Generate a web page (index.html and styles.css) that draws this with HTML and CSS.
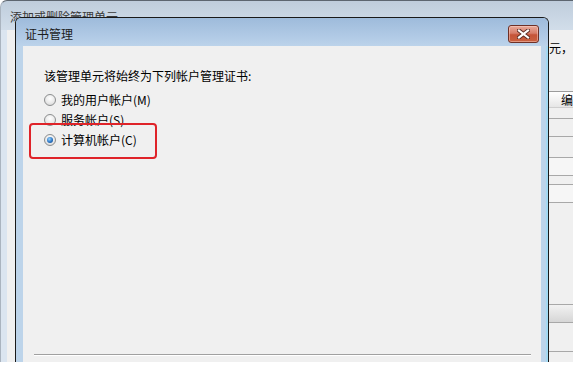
FILE: index.html
```html
<!DOCTYPE html>
<html lang="zh-CN">
<head>
<meta charset="utf-8">
<title>证书管理</title>
<link rel="stylesheet" href="styles.css">
</head>
<body>
<div class="screen">
  <div class="bgwin">
    <div class="bg-title">添加或删除管理单元</div>
    <div class="bg-body">
      <div class="bg-frame"></div>
      <div class="bg-client">
        <div class="bg-left"></div>
        <div class="bg-right">
          <div class="r-text">元，</div>
          <div class="r-head">编</div>
          <div class="r-row r-h10"></div>
          <div class="r-row r-h18 line"></div>
          <div class="r-row r-h21 line"></div>
          <div class="r-row r-h18 line alt"></div>
          <div class="r-row r-h9 line"></div>
          <div class="r-row r-h18 line alt"></div>
          <div class="r-row r-h102 line"></div>
          <div class="r-row r-h18 line grad"></div>
          <div class="r-row r-h29 line"></div>
          <div class="r-row r-fill line"></div>
        </div>
      </div>
    </div>
  </div>

  <div class="dialog">
    <div class="dlg-titlebar">
      <span class="dlg-title">证书管理</span>
      <span class="close">
        <svg width="13" height="10" viewBox="0 0 13 10">
          <path d="M2 1.5 L11 8.5 M11 1.5 L2 8.5" stroke="#5a2a22" stroke-width="4" stroke-linecap="square" fill="none"/>
          <path d="M2 1.5 L11 8.5 M11 1.5 L2 8.5" stroke="#ffffff" stroke-width="2.2" stroke-linecap="square" fill="none"/>
        </svg>
      </span>
    </div>
    <div class="dlg-body">
      <div class="dlg-client">
        <p class="prompt">该管理单元将始终为下列帐户管理证书:</p>
        <div class="radios">
          <label class="radio"><span class="rb"></span><span>我的用户帐户(M)</span></label>
          <label class="radio"><span class="rb"></span><span>服务帐户(S)</span></label>
          <label class="radio"><span class="rb on"></span><span>计算机帐户(C)</span></label>
        </div>
        <div class="sep"></div>
        <div class="highlight"></div>
      </div>
    </div>
  </div>
</div>
</body>
</html>
```

FILE: styles.css
```css
html, body {
  margin: 0;
  padding: 0;
  background: #ffffff;
}

body {
  font-family: "Noto Sans CJK SC", "Liberation Sans", sans-serif;
  font-size: 12px;
  color: #000;
}

.screen {
  position: relative;
  width: 573px;
  height: 362px;
  overflow: hidden;
}

/* background window */
.bgwin {
  box-sizing: border-box;
  height: 100%;
  display: flex;
  flex-direction: column;
  border-top: 1px solid #5d6670;
  border-left: 1px solid #aab4bf;
  border-top-left-radius: 7px;
  background: linear-gradient(#bfcddc, #d2deea 30px);
}

.bg-title {
  box-sizing: border-box;
  height: 29px;
  padding: 8px 0 0 9px;
  line-height: 16px;
  color: #3a3a3a;
  white-space: nowrap;
}

.bg-body {
  flex: 1;
  display: flex;
}

.bg-frame {
  width: 6px;
  background: #dbe5f0;
}

.bg-client {
  flex: 1;
  display: flex;
  background: #f0f0f0;
}

.bg-left {
  width: 542px;
  flex: none;
}

.bg-right {
  flex: 1;
  min-width: 0;
  display: flex;
  flex-direction: column;
}

.r-text {
  box-sizing: border-box;
  height: 61px;
  padding-top: 10px;
  line-height: 16px;
  white-space: nowrap;
}

.r-head {
  box-sizing: border-box;
  height: 17px;
  padding-left: 12px;
  line-height: 15px;
  border-top: 1px solid #9c9c9c;
  border-bottom: 1px solid #cfcfcf;
  background: linear-gradient(#ffffff, #f3f3f3 50%, #e6e6e6);
  white-space: nowrap;
}

.r-row {
  box-sizing: border-box;
}

.r-row.line {
  border-top: 1px solid #a8a8a8;
}

.r-row.alt {
  background: #f6f6f6;
}

.r-row.grad {
  background: linear-gradient(#f2f2f2, #d6d6d6);
}

.r-h9 { height: 9px; }
.r-h10 { height: 10px; }
.r-h18 { height: 18px; }
.r-h21 { height: 21px; }
.r-h29 { height: 29px; }
.r-h102 { height: 102px; }
.r-fill { flex: 1; }

/* dialog */
.dialog {
  position: absolute;
  left: 15px;
  top: 17px;
  box-sizing: border-box;
  width: 534px;
  height: 345px;
  display: flex;
  flex-direction: column;
  border: 1px solid #1a1a1a;
  border-bottom: none;
  border-radius: 6px 6px 0 0;
  background: #bdd4ea;
}

.dlg-titlebar {
  height: 28px;
  flex: none;
  display: flex;
  justify-content: space-between;
  align-items: flex-start;
  padding: 0 9px;
  border-radius: 5px 5px 0 0;
  background: linear-gradient(#9ebbdb, #b2cbe6 70%, #bcd3ea);
}

.dlg-title {
  margin-top: 8px;
  line-height: 16px;
  color: #1c1c1c;
}

.close {
  box-sizing: border-box;
  margin-top: 7px;
  width: 31px;
  height: 18px;
  display: flex;
  align-items: center;
  justify-content: center;
  border: 1px solid #6e3026;
  border-radius: 3px;
  background: linear-gradient(#e9a999, #d77d69 45%, #c55438 55%, #c9603f);
  box-shadow: inset 0 0 0 1px rgba(255, 220, 210, 0.45);
}

.dlg-body {
  flex: 1;
  display: flex;
  padding: 0 7px;
  box-shadow: inset -2px 0 0 #a3d9f2;
}

.dlg-client {
  position: relative;
  flex: 1;
  display: flex;
  flex-direction: column;
  padding: 22px 0 6px 0;
  background: #f0f0f0;
}

.prompt {
  margin: 0;
  padding-left: 21px;
  line-height: 16px;
  white-space: nowrap;
}

.radios {
  margin-top: 6px;
  padding-left: 21px;
  display: flex;
  flex-direction: column;
}

.radio {
  height: 20px;
  display: flex;
  align-items: center;
  gap: 5px;
  line-height: 16px;
  white-space: nowrap;
}

.rb {
  box-sizing: border-box;
  width: 12px;
  height: 12px;
  border: 1px solid #8c8e8f;
  border-radius: 50%;
  background: radial-gradient(circle at 50% 35%, #ffffff, #e9e9e9 55%, #cfcfcf);
  display: grid;
  place-items: center;
}

.rb.on::after {
  content: "";
  width: 6px;
  height: 6px;
  border-radius: 50%;
  background: radial-gradient(circle at 40% 35%, #9ad6ff, #2a74c4 55%, #0e3c78);
}

.sep {
  margin: auto 10px 0 11px;
  border-top: 1px solid #a0a0a0;
  border-bottom: 1px solid #ffffff;
}

.highlight {
  position: absolute;
  left: 6px;
  top: 77px;
  box-sizing: border-box;
  width: 128px;
  height: 36px;
  border: 2px solid #df2329;
  border-radius: 4px;
}
```
